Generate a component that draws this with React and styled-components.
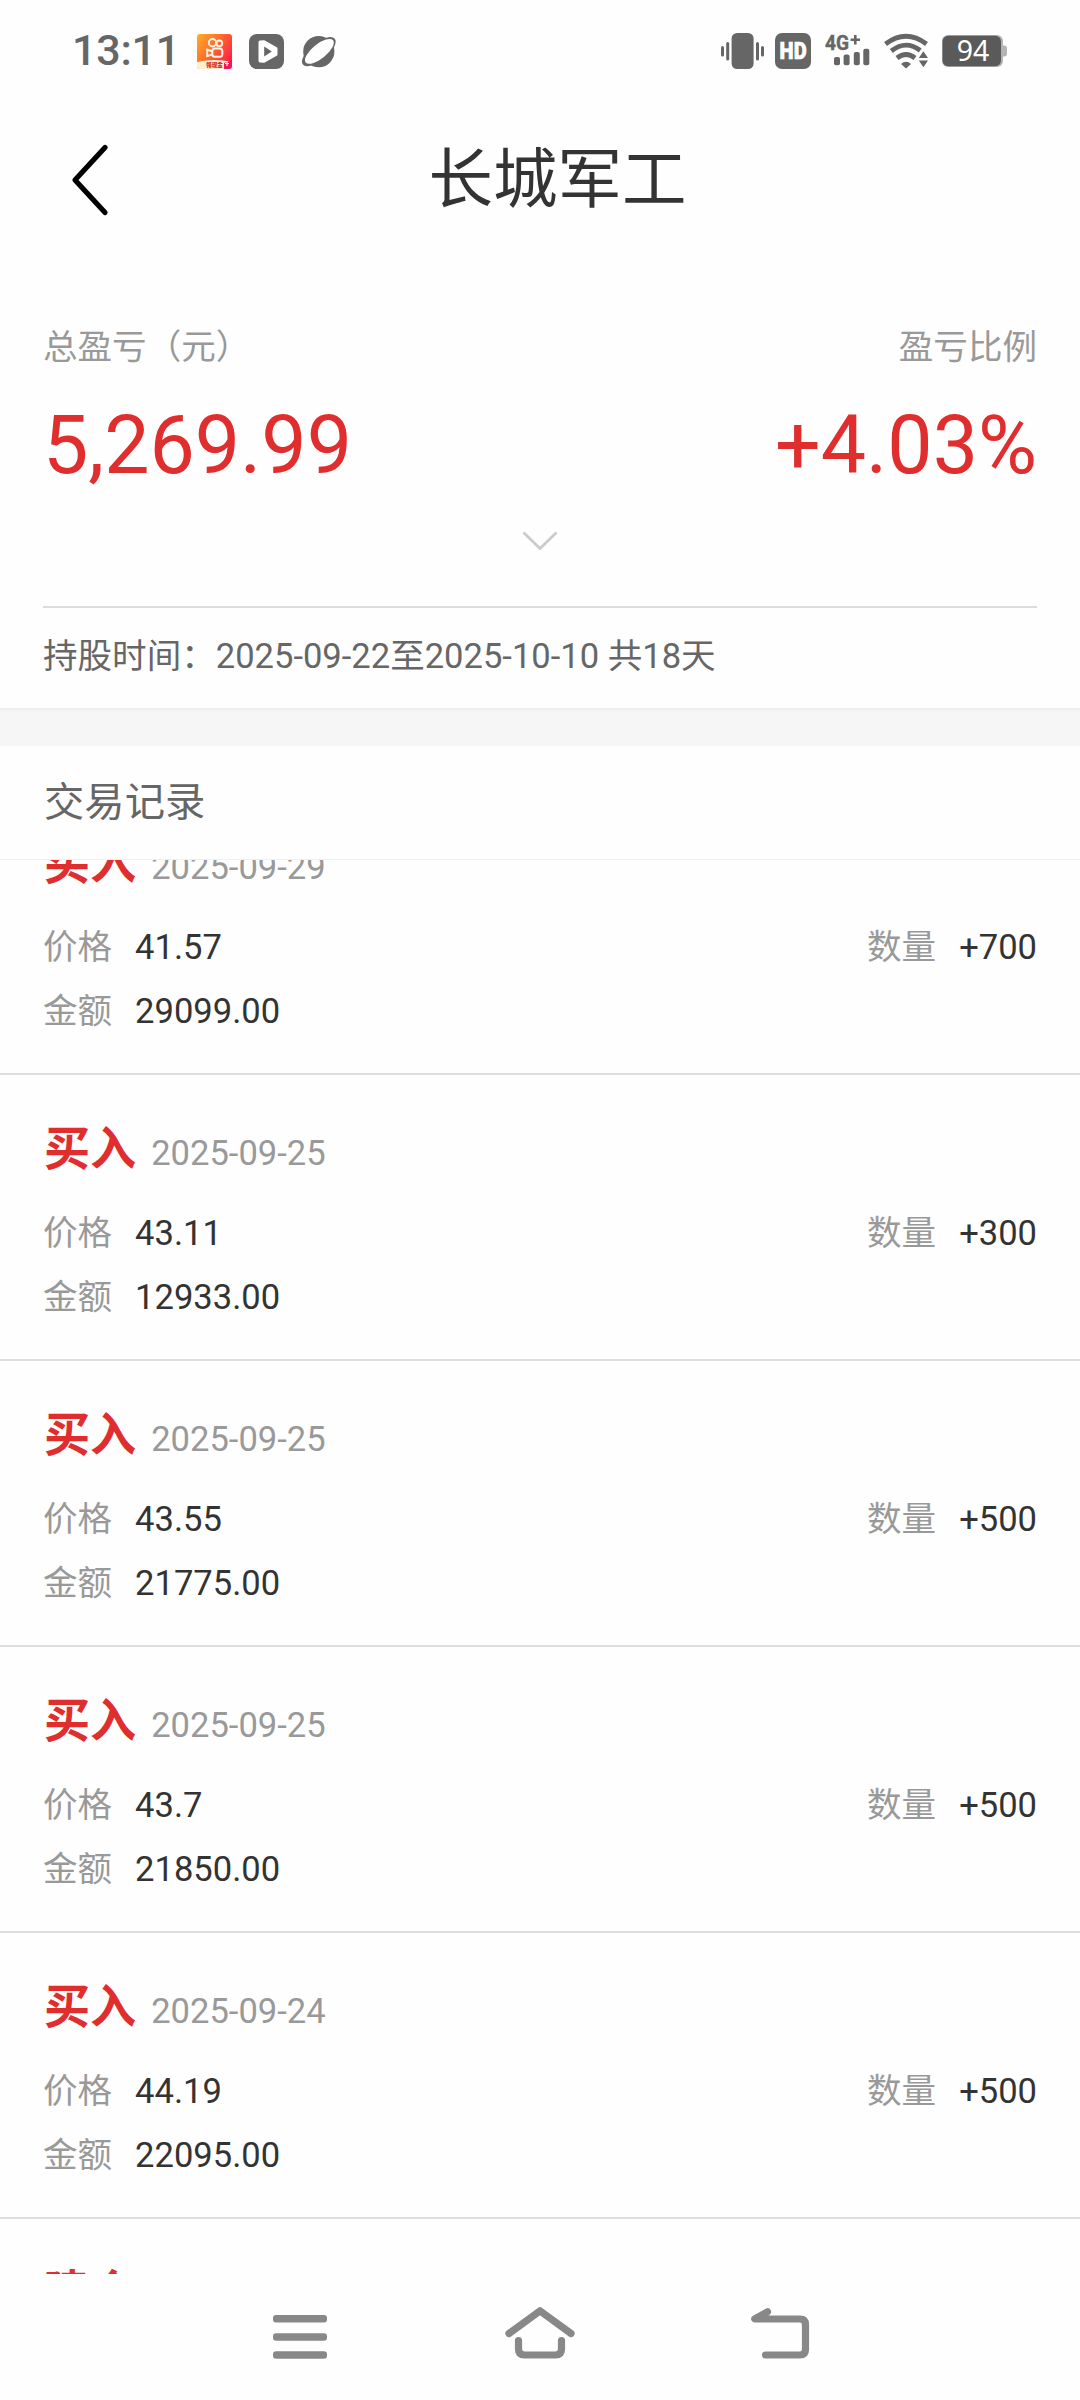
import React from 'react';
import styled, { createGlobalStyle } from 'styled-components';

const Global = createGlobalStyle`
  html, body { margin: 0; padding: 0; background: #fefefe; }
  * { box-sizing: border-box; }
`;

const Screen = styled.main`
  width: 1080px;
  height: 2400px;
  display: flex;
  flex-direction: column;
  overflow: hidden;
  background: #fefefe;
  color: #333;
  font-family: Roboto, "Noto Sans CJK SC", sans-serif;
  font-size: 34.56px;
  white-space: nowrap;
`;

const StatusBar = styled.header`
  height: 102px;
  padding: 0 72px 0 72px;
  display: flex;
  align-items: center;
  justify-content: space-between;
  flex: none;
`;

const StatusGroup = styled.div`
  display: flex;
  align-items: center;
`;

const Clock = styled.time`
  width: 107px;
  margin-right: 18px;
  padding-bottom: 2px;
  font-size: 43px;
  line-height: 96px;
  font-weight: 500;
  letter-spacing: -0.2px;
  color: #666;
`;

const Icon = styled.svg`
  display: block;
  flex: none;
  overflow: visible;
  margin-left: ${(p) => p.$ml || 0}px;
`;

const TitleBar = styled.div`
  height: 156px;
  flex: none;
  display: flex;
  align-items: center;
  padding-left: 69px;
`;

const BackButton = styled.button`
  display: block;
  width: 42px;
  height: 80px;
  padding: 0;
  border: 0;
  background: none;
`;

const Title = styled.h1`
  flex: 1;
  margin: 0;
  padding-right: 76px;
  text-align: center;
  font-size: 64.5px;
  line-height: 96px;
  font-weight: 400;
`;

const Summary = styled.section`
  flex: none;
  height: 350px;
  margin: 0 43px;
  padding-top: 63px;
  border-bottom: 2px solid #ddd;
`;

const SummaryRow = styled.div`
  display: flex;
  justify-content: space-between;
`;

const SummaryLabel = styled.span`
  line-height: 52px;
  color: #999;
`;

const BigNumber = styled.strong`
  font-size: 80.64px;
  line-height: 146px;
  font-weight: 400;
  color: #e02d2d;
`;

const ExpandButton = styled.button`
  display: flex;
  justify-content: center;
  width: 100%;
  height: 30px;
  padding: 0;
  margin-top: 9px;
  border: 0;
  background: none;
`;

const Holding = styled.p`
  flex: none;
  height: 100px;
  margin: 0;
  padding-left: 43px;
  line-height: 97px;
  color: #666;
`;

const Divider = styled.div`
  flex: none;
  height: 38px;
  border-top: 2px solid #eee;
  background: #f6f6f6;
`;

const SectionTitle = styled.h2`
  flex: none;
  height: 114px;
  margin: 0;
  padding-left: 44px;
  border-bottom: 1px solid #f0f0f0;
  font-size: 40.32px;
  line-height: 114px;
  font-weight: 400;
  color: #666;
`;

const TradeList = styled.ul`
  flex: 1;
  min-height: 0;
  margin: 0;
  padding: 0;
  overflow: hidden;
  display: flex;
  flex-direction: column;
  justify-content: flex-start;
  list-style: none;
`;

const Trade = styled.li`
  flex: none;
  height: 286px;
  padding: 43px 43px 0;
  border-bottom: 2px solid #ddd;
  &:first-child { margin-top: -71px; }
`;

const TradeHead = styled.div`
  height: 63px;
  margin-bottom: 21px;
  display: flex;
  align-items: baseline;
  line-height: 63px;
`;

const TradeKind = styled.b`
  margin-right: 15px;
  padding-left: 1px;
  font-size: 46.08px;
  font-weight: 700;
  color: #e02d2d;
`;

const TradeDate = styled.time`
  color: #999;
`;

const TradeLine = styled.div`
  display: flex;
  justify-content: space-between;
  height: 63.6px;
  line-height: 63.6px;
`;

const Field = styled.span`
  display: flex;
  gap: 23px;
`;

const FieldName = styled.span`
  color: #999;
`;

const NavBar = styled.nav`
  flex: none;
  height: 126px;
  display: flex;
  align-items: center;
  justify-content: center;
  gap: 170px;
`;

const NavButton = styled.button`
  display: block;
  width: 70px;
  height: 60px;
  padding: 0;
  border: 0;
  background: none;
`;

const trades = [
  { kind: '买入', date: '2025-09-29', price: '41.57', amount: '29099.00', qty: '+700' },
  { kind: '买入', date: '2025-09-25', price: '43.11', amount: '12933.00', qty: '+300' },
  { kind: '买入', date: '2025-09-25', price: '43.55', amount: '21775.00', qty: '+500' },
  { kind: '买入', date: '2025-09-25', price: '43.7', amount: '21850.00', qty: '+500' },
  { kind: '买入', date: '2025-09-24', price: '44.19', amount: '22095.00', qty: '+500' },
  { kind: '建仓' },
];

function KuaishouIcon() {
  return (
    <Icon width="35" height="35" viewBox="0 0 35 35">
      <defs>
        <linearGradient id="ks" x1="0" y1="0" x2="1" y2="0.7">
          <stop offset="0" stopColor="#ffae2b" />
          <stop offset="0.5" stopColor="#ff6a2a" />
          <stop offset="1" stopColor="#ff1f48" />
        </linearGradient>
      </defs>
      <rect width="35" height="35" rx="3" fill="url(#ks)" />
      <g fill="none" stroke="#fff3e4" strokeWidth="2">
        <circle cx="15.5" cy="8.7" r="3.7" />
        <circle cx="22.3" cy="9.3" r="2.9" />
        <rect x="15.3" y="14.6" width="10" height="8.2" rx="2.6" />
        <path d="M15 17.2l-4.8-1.6v6.6l4.8-1.6" />
      </g>
      <path d="M0 28Q17 24 35 28V32a3 3 0 0 1-3 3H3a3 3 0 0 1-3-3z" fill="#fff0d2" />
      <path d="M27 35V29l8-3v6a3 3 0 0 1-3 3z" fill="#f01855" />
      <path d="M30 27v5M28 29.5h4" stroke="#fff" strokeWidth="1.2" />
      <text x="9" y="32.6" fontSize="6" fontWeight="900" fill="#d8281e" textLength="17" lengthAdjust="spacingAndGlyphs">领现金</text>
    </Icon>
  );
}

function PlayIcon() {
  return (
    <Icon $ml={17} width="35" height="35" viewBox="0 0 35 35">
      <rect width="35" height="35" rx="8" fill="#666" />
      <path d="M11 8L15 7.700 27 14.600V20.400L15 27.300 11 27z" fill="#fff" stroke="#fff" strokeWidth="3" strokeLinejoin="round" />
      <path d="M15.2 12.4v10.2l7.6-5.1z" fill="#666" />
    </Icon>
  );
}

function PlanetIcon() {
  return (
    <Icon $ml={17} width="36" height="35" viewBox="0 0 36 35">
      <circle cx="17.8" cy="17.6" r="15.6" fill="#666" />
      <ellipse cx="17.8" cy="17.6" rx="20.5" ry="8.6" transform="rotate(-39 17.8 17.6)" fill="#666" />
      <ellipse cx="18.4" cy="17.4" rx="17.6" ry="7.2" transform="rotate(-39 18.4 17.4)" fill="#fefefe" />
    </Icon>
  );
}

function VibrateIcon() {
  return (
    <Icon width="43" height="36" viewBox="0 0 43 36">
      <g fill="#666">
        <rect x="10.6" width="22" height="36" rx="5.5" />
        <rect x="0" y="13" width="3" height="10.5" rx="1.5" />
        <rect x="5.2" y="9" width="3" height="18.5" rx="1.5" />
        <rect x="35" y="9" width="3" height="18.5" rx="1.5" />
        <rect x="40" y="13" width="3" height="10.5" rx="1.5" />
      </g>
    </Icon>
  );
}

function HdIcon() {
  return (
    <Icon $ml={11} width="36" height="36" viewBox="0 0 36 36">
      <rect width="36" height="36" rx="7" fill="#666" />
      <text x="4.6" y="26.4" fontSize="23.5" fontWeight="900" fill="#fff" stroke="#fff" strokeWidth="0.6" textLength="27" lengthAdjust="spacingAndGlyphs" fontFamily="Roboto">HD</text>
    </Icon>
  );
}

function SignalIcon() {
  return (
    <Icon $ml={14} width="45" height="36" viewBox="0 0 45 36" fill="#666">
      <text x="0" y="16.8" fontSize="19.5" fontWeight="700" stroke="#666" strokeWidth="0.4" textLength="24" lengthAdjust="spacingAndGlyphs" fontFamily="Roboto">4G</text>
      <path d="M30.3 2v9.6M25.6 6.8h9.4" stroke="#666" strokeWidth="2.6" />
      <rect x="9" y="24" width="6" height="8.3" rx="2" />
      <rect x="18.6" y="21.6" width="6" height="10.7" rx="2" />
      <rect x="28.8" y="19" width="6" height="13.3" rx="2" />
      <rect x="38.3" y="15.8" width="6" height="16.5" rx="2" />
    </Icon>
  );
}

function WifiIcon() {
  return (
    <Icon $ml={14} width="45" height="36" viewBox="0 0 45 36">
      <g fill="none" stroke="#666" strokeWidth="4.8">
        <path d="M1.500 11Q22 -4.500 42.500 11" />
        <path d="M7.300 18Q22 6.500 36.200 17.500" />
        <path d="M13 25Q22 18 31 25" />
      </g>
      <path d="M17 31Q22 26.500 27 31L22 35.600z" fill="#666" />
      <path d="M39.4 18.2l4.6 6.8h-9.2zM39.4 34.2l4.6-6.8h-9.2z" fill="#666" />
    </Icon>
  );
}

function BatteryIcon() {
  return (
    <Icon $ml={13} width="66" height="32" viewBox="0 0 66 32">
      <path d="M60 10.5h2.2a3 3 0 0 1 2.8 3v5a3 3 0 0 1-2.8 3H60z" fill="#b4b4b4" />
      <rect width="61" height="32" rx="6" fill="#b4b4b4" />
      <rect x="0.500" y="0.800" width="58.500" height="30.400" rx="5.500" fill="#5a5a5a" />
      <text x="14.700" y="26.200" fontSize="28.500" fill="#fff" fontFamily="Noto Sans">94</text>
    </Icon>
  );
}

export default function App() {
  return (
    <Screen>
      <Global />
      <StatusBar>
        <StatusGroup>
          <Clock>13:11</Clock>
          <KuaishouIcon />
          <PlayIcon />
          <PlanetIcon />
        </StatusGroup>
        <StatusGroup>
          <VibrateIcon />
          <HdIcon />
          <SignalIcon />
          <WifiIcon />
          <BatteryIcon />
        </StatusGroup>
      </StatusBar>

      <TitleBar>
        <BackButton aria-label="返回">
          <Icon width="42" height="80" viewBox="0 0 42 80">
            <path d="M36 7.500L6 40l30 32.500" fill="none" stroke="#000" strokeWidth="5.200" strokeLinecap="round" strokeLinejoin="round" />
          </Icon>
        </BackButton>
        <Title>长城军工</Title>
      </TitleBar>

      <Summary>
        <SummaryRow>
          <SummaryLabel>总盈亏（元）</SummaryLabel>
          <SummaryLabel>盈亏比例</SummaryLabel>
        </SummaryRow>
        <SummaryRow>
          <BigNumber>5,269.99</BigNumber>
          <BigNumber>+4.03%</BigNumber>
        </SummaryRow>
        <ExpandButton aria-label="展开">
          <Icon width="36" height="24" viewBox="0 0 36 24">
            <path d="M1.500 4.500L18 20.500 34.500 4.500" fill="none" stroke="#ccc" strokeWidth="2.800" />
          </Icon>
        </ExpandButton>
      </Summary>
      <Holding>持股时间：2025-09-22至2025-10-10 共18天</Holding>
      <Divider />
      <SectionTitle>交易记录</SectionTitle>

      <TradeList>
        {trades.map((t, i) => (
          <Trade key={i}>
            <TradeHead>
              <TradeKind>{t.kind}</TradeKind>
              {t.date && <TradeDate>{t.date}</TradeDate>}
            </TradeHead>
            {t.price && (
              <>
                <TradeLine>
                  <Field><FieldName>价格</FieldName>{t.price}</Field>
                  <Field><FieldName>数量</FieldName>{t.qty}</Field>
                </TradeLine>
                <TradeLine>
                  <Field><FieldName>金额</FieldName>{t.amount}</Field>
                </TradeLine>
              </>
            )}
          </Trade>
        ))}
      </TradeList>

      <NavBar>
        <NavButton aria-label="最近任务">
          <Icon width="70" height="60" viewBox="265 2307 70 60" fill="#888">
            <rect x="273" y="2315" width="54" height="7.600" rx="3" />
            <rect x="273" y="2333.200" width="54" height="7.600" rx="3" />
            <rect x="273" y="2351.200" width="54" height="7.600" rx="3" />
          </Icon>
        </NavButton>
        <NavButton aria-label="主页">
          <Icon width="70" height="60" viewBox="505 2307 70 60">
            <path d="M509 2333.500L540 2310.800l31 22.700M518.500 2340.500V2349q0 6 6 6h31q6 0 6-6v-8.500" fill="none" stroke="#888" strokeWidth="7.200" strokeLinecap="round" strokeLinejoin="round" />
          </Icon>
        </NavButton>
        <NavButton aria-label="返回上一级">
          <Icon width="70" height="60" viewBox="745 2307 70 60">
            <path d="M767.500 2311.800L754.800 2319H800q5.500 0 5.500 5.500V2349.500q0 5.500-5.500 5.500H765.500" fill="none" stroke="#888" strokeWidth="7.200" strokeLinecap="round" strokeLinejoin="round" />
          </Icon>
        </NavButton>
      </NavBar>
    </Screen>
  );
}
